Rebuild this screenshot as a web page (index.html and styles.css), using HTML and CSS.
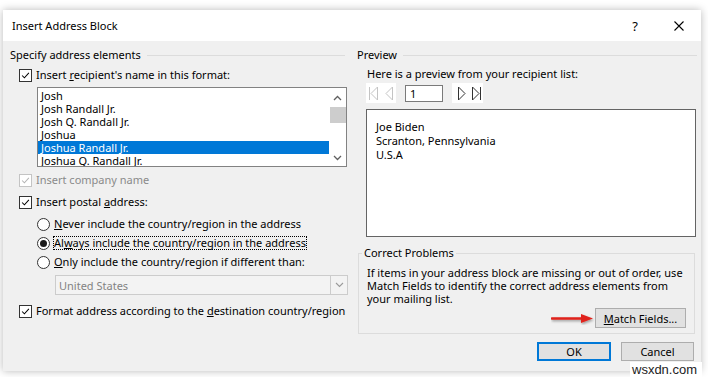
FILE: index.html
```html
<!DOCTYPE html>
<html>
<head>
<meta charset="utf-8">
<link rel="stylesheet" href="styles.css">
</head>
<body>
<div class="dialog">
  <div class="titlebar">
    <span class="title">Insert Address Block</span>
    <span class="help">?</span>
    <svg class="close" width="10" height="10" viewBox="0 0 10 10"><path d="M0.5 0.5 L9.5 9.5 M9.5 0.5 L0.5 9.5" stroke="#000" stroke-width="1.1" fill="none"/></svg>
  </div>
  <div class="body">
    <div class="cols">
      <div class="left">
        <div class="group-head"><span>Specify address elements</span><i class="rule"></i></div>
        <div class="row chk-row">
          <span class="cb"><svg viewBox="0 0 13 13"><path d="M2.5 6.5 L5.2 9.2 L10.5 3.5" fill="none" stroke="#000" stroke-width="1.2"/></svg></span>
          <span class="lbl">Insert <u>r</u>ecipient's name in this format:</span>
        </div>
        <div class="listbox">
          <div class="items">
            <div class="item">Josh</div>
            <div class="item">Josh Randall Jr.</div>
            <div class="item">Josh Q. Randall Jr.</div>
            <div class="item">Joshua</div>
            <div class="item sel">Joshua Randall Jr.</div>
            <div class="item">Joshua Q. Randall Jr.</div>
          </div>
          <div class="scroll">
            <svg class="arr" width="9" height="6" viewBox="0 0 9 6"><path d="M1 5 L4.5 1.5 L8 5" fill="none" stroke="#606060" stroke-width="1.3"/></svg>
            <div class="thumb"></div>
            <div class="spacer"></div>
            <svg class="arr" width="9" height="6" viewBox="0 0 9 6"><path d="M1 1 L4.5 4.5 L8 1" fill="none" stroke="#606060" stroke-width="1.3"/></svg>
          </div>
        </div>
        <div class="row chk-row company">
          <span class="cb dis"><svg viewBox="0 0 13 13"><path d="M2.5 6.5 L5.2 9.2 L10.5 3.5" fill="none" stroke="#b4b4b4" stroke-width="1.2"/></svg></span>
          <span class="lbl dis-text">Insert company name</span>
        </div>
        <div class="row chk-row postal">
          <span class="cb"><svg viewBox="0 0 13 13"><path d="M2.5 6.5 L5.2 9.2 L10.5 3.5" fill="none" stroke="#000" stroke-width="1.2"/></svg></span>
          <span class="lbl">Insert postal <u>a</u>ddress:</span>
        </div>
        <div class="row radio-row r1">
          <span class="rb"></span>
          <span class="lbl"><u>N</u>ever include the country/region in the address</span>
        </div>
        <div class="row radio-row r2">
          <span class="rb on"></span>
          <span class="lbl focus">Al<u>w</u>ays include the country/region in the address</span>
        </div>
        <div class="row radio-row r3">
          <span class="rb"></span>
          <span class="lbl"><u>O</u>nly include the country/region if different than:</span>
        </div>
        <div class="combo">
          <span class="combo-text">United States</span>
          <span class="combo-btn"><svg width="9" height="6" viewBox="0 0 9 6"><path d="M1 1 L4.5 4.5 L8 1" fill="none" stroke="#9a9a9a" stroke-width="1.1"/></svg></span>
        </div>
        <div class="row chk-row format">
          <span class="cb"><svg viewBox="0 0 13 13"><path d="M2.5 6.5 L5.2 9.2 L10.5 3.5" fill="none" stroke="#000" stroke-width="1.2"/></svg></span>
          <span class="lbl">Format address according to the <u>d</u>estination country/region</span>
        </div>
      </div>
      <div class="right">
        <div class="group-head"><span>Preview</span><i class="rule"></i></div>
        <div class="row here">Here is a preview from your recipient list:</div>
        <div class="nav">
          <span class="navbox nb1"><svg width="30" height="20" viewBox="0 0 30 20"><path d="M3.5 4 V17 M11.5 4 L5 10.5 L11.5 17 Z M26.5 4 L20 10.5 L26.5 17 Z" fill="none" stroke="#c4c4c4" stroke-width="1"/></svg></span>
          <span class="navinput">1</span>
          <span class="navbox nb2"><svg width="31" height="20" viewBox="0 0 31 20"><path d="M6.5 4 L13 10.5 L6.5 17 Z M20.5 4 L27 10.5 L20.5 17 Z M28.5 4 V17" fill="none" stroke="#333" stroke-width="1"/></svg></span>
        </div>
        <div class="preview">
          <div>Joe Biden</div>
          <div>Scranton, Pennsylvania</div>
          <div>U.S.A</div>
        </div>
        <fieldset class="problems">
          <legend>Correct Problems</legend>
          <p class="ptext">If items in your address block are missing or out of order, use Match Fields to identify the correct address elements from your mailing list.</p>
          <div class="match-row">
            <svg class="red-arrow" width="44" height="12" viewBox="0 0 44 12"><defs><filter id="sh" x="-10%" y="-50%" width="130%" height="220%"><feDropShadow dx="1" dy="1.5" stdDeviation="1" flood-color="#000" flood-opacity="0.35"/></filter></defs><g filter="url(#sh)"><path d="M1 5.5 H32" stroke="#e0201c" stroke-width="2.6" stroke-linecap="round"/><path d="M30 1 L42 5.5 L30 10 Z" fill="#e0201c"/></g></svg>
            <button class="btn match"><u>M</u>atch Fields...</button>
          </div>
        </fieldset>
      </div>
    </div>
    <div class="footer">
      <button class="btn ok">OK</button>
      <button class="btn cancel">Cancel</button>
    </div>
  </div>
</div>
<div class="watermark">wsxdn.com</div>
</body>
</html>
```
FILE: styles.css
```css
* { box-sizing: border-box; }
html, body { margin: 0; padding: 0; }
body {
  background: #fff;
  font-family: "Noto Sans", "Segoe UI", sans-serif;
  font-size: 11px;
  color: #000;
  width: 708px;
  height: 377px;
  overflow: hidden;
  position: relative;
}
u { text-decoration: underline; text-underline-offset: 1px; }

.dialog {
  margin: 10px 0 0 3px;
  width: 698px;
  height: 361px;
  background: #f0f0f0;
  box-shadow: 0 0 8px rgba(0,0,0,0.28);
  display: flex;
  flex-direction: column;
}
.titlebar {
  height: 31px;
  background: #fff;
  display: flex;
  align-items: center;
  padding-left: 9px;
  flex: none;
}
.title { flex: 1; font-size: 11px; }
.help { width: 12px; text-align: center; font-size: 13px; margin-right: 33px; }
.close { margin-right: 17px; }

.body { flex: 1; padding: 7px 4px 0 7px; display: flex; flex-direction: column; }
.cols { display: grid; grid-template-columns: 338px 340px; column-gap: 9px; }

.group-head { display: flex; align-items: center; height: 14px; line-height: 14px; }
.group-head .rule { flex: 1; height: 1px; background: #dcdcdc; margin-left: 6px; }
.left .group-head .rule { margin-right: 3px; }

.row { display: flex; align-items: center; height: 14px; line-height: 14px; white-space: nowrap; }
.chk-row { margin-top: 6px; padding-left: 9px; }
.cb {
  width: 13px; height: 13px; border: 1px solid #333; background: #fff;
  display: inline-flex; flex: none; position: relative;
}
.cb svg { width: 11px; height: 11px; }
.cb.dis { border-color: #c4c4c4; }
.dis-text { color: #8a8a8a; }
.lbl { margin-left: 4px; }

.listbox {
  margin: 5px 0 0 27px;
  width: 310px; height: 80px;
  border: 1px solid #828282;
  background: #fff;
  display: flex;
  overflow: hidden;
}
.items { flex: 1; padding-top: 1px; }
.item { height: 13px; line-height: 13px; padding-left: 3px; white-space: nowrap; }
.item.sel { background: #0078d7; color: #fff; }
.scroll { width: 17px; display: flex; flex-direction: column; align-items: center; padding-top: 7px; padding-bottom: 5px; }
.scroll .thumb { width: 16px; height: 16px; background: #cdcdcd; margin-top: 6px; }
.scroll .spacer { flex: 1; }

.company { margin-top: 6px; }
.postal { margin-top: 8px; }
.radio-row { padding-left: 27px; margin-top: 5px; }
.radio-row.r1 { margin-top: 8px; }
.rb {
  width: 13px; height: 13px; border: 1px solid #333; border-radius: 50%; background: #fff;
  display: inline-flex; align-items: center; justify-content: center; flex: none;
}
.rb.on::after { content: ""; width: 7px; height: 7px; border-radius: 50%; background: #1a1a1a; }
.radio-row .lbl { margin-left: 4px; }
.focus { outline: 1px dotted #000; outline-offset: -1px; padding: 0 1px; margin-left: 3px !important; }

.combo {
  margin: 6px 0 0 45px;
  width: 293px; height: 20px;
  border: 1px solid #cccccc;
  background: #f3f3f3;
  display: flex; align-items: center;
}
.combo-text { flex: 1; padding-left: 3px; color: #838383; }
.combo-btn {
  width: 17px; height: 18px; border-left: 1px solid #cccccc;
  display: flex; align-items: center; justify-content: center;
}
.format { margin-top: 9px; }

.right .here { margin-top: 5px; padding-left: 10px; }
.nav { display: flex; align-items: center; margin-top: 2px; height: 20px; padding-left: 9px; }
.navbox { background: #fff; height: 20px; display: flex; }
.navinput {
  width: 38px; height: 17px; border: 1px solid #7a7a7a; background: #fff;
  margin-left: 9px; padding-left: 4px; line-height: 15px;
}
.nb2 { margin-left: 9px; }

.preview {
  margin: 6px 0 0 9px;
  width: 330px; height: 128px;
  border: 1px solid #646464;
  background: #fff;
  padding: 10px 0 0 9px;
  line-height: 14px;
}

.problems {
  margin: 9px 0 0 1px;
  width: 337px;
  height: 88px;
  border: 1px solid #dcdcdc;
  padding: 0 8px 5px 8px;
  min-width: 0;
}
.problems legend { padding: 0 2px; margin-left: -5px; line-height: 14px; }
.ptext { margin: 6px 0 0 0; line-height: 13px; }
.match-row { display: flex; justify-content: flex-end; align-items: center; margin-top: 3px; gap: 0; }
.red-arrow { margin-right: 0; margin-top: 1px; }

.btn {
  font-family: inherit; font-size: 11px; color: #000;
  background: #e1e1e1; border: 1px solid #adadad;
  padding: 0; margin: 0;
}
.match { width: 91px; height: 20px; }
.footer { display: flex; justify-content: flex-end; gap: 10px; margin-top: 8px; padding-right: 3px; }
.ok { width: 74px; height: 19px; border: 2px solid #0078d7; }
.cancel { width: 73px; height: 19px; }

.watermark {
  position: absolute; left: 630px; top: 362px;
  width: 72px; height: 15px;
  background: #fff;
  font-family: "Liberation Sans", Arial, sans-serif;
  font-size: 13px; line-height: 15px;
  color: #222;
  padding-left: 2px;
}
```
